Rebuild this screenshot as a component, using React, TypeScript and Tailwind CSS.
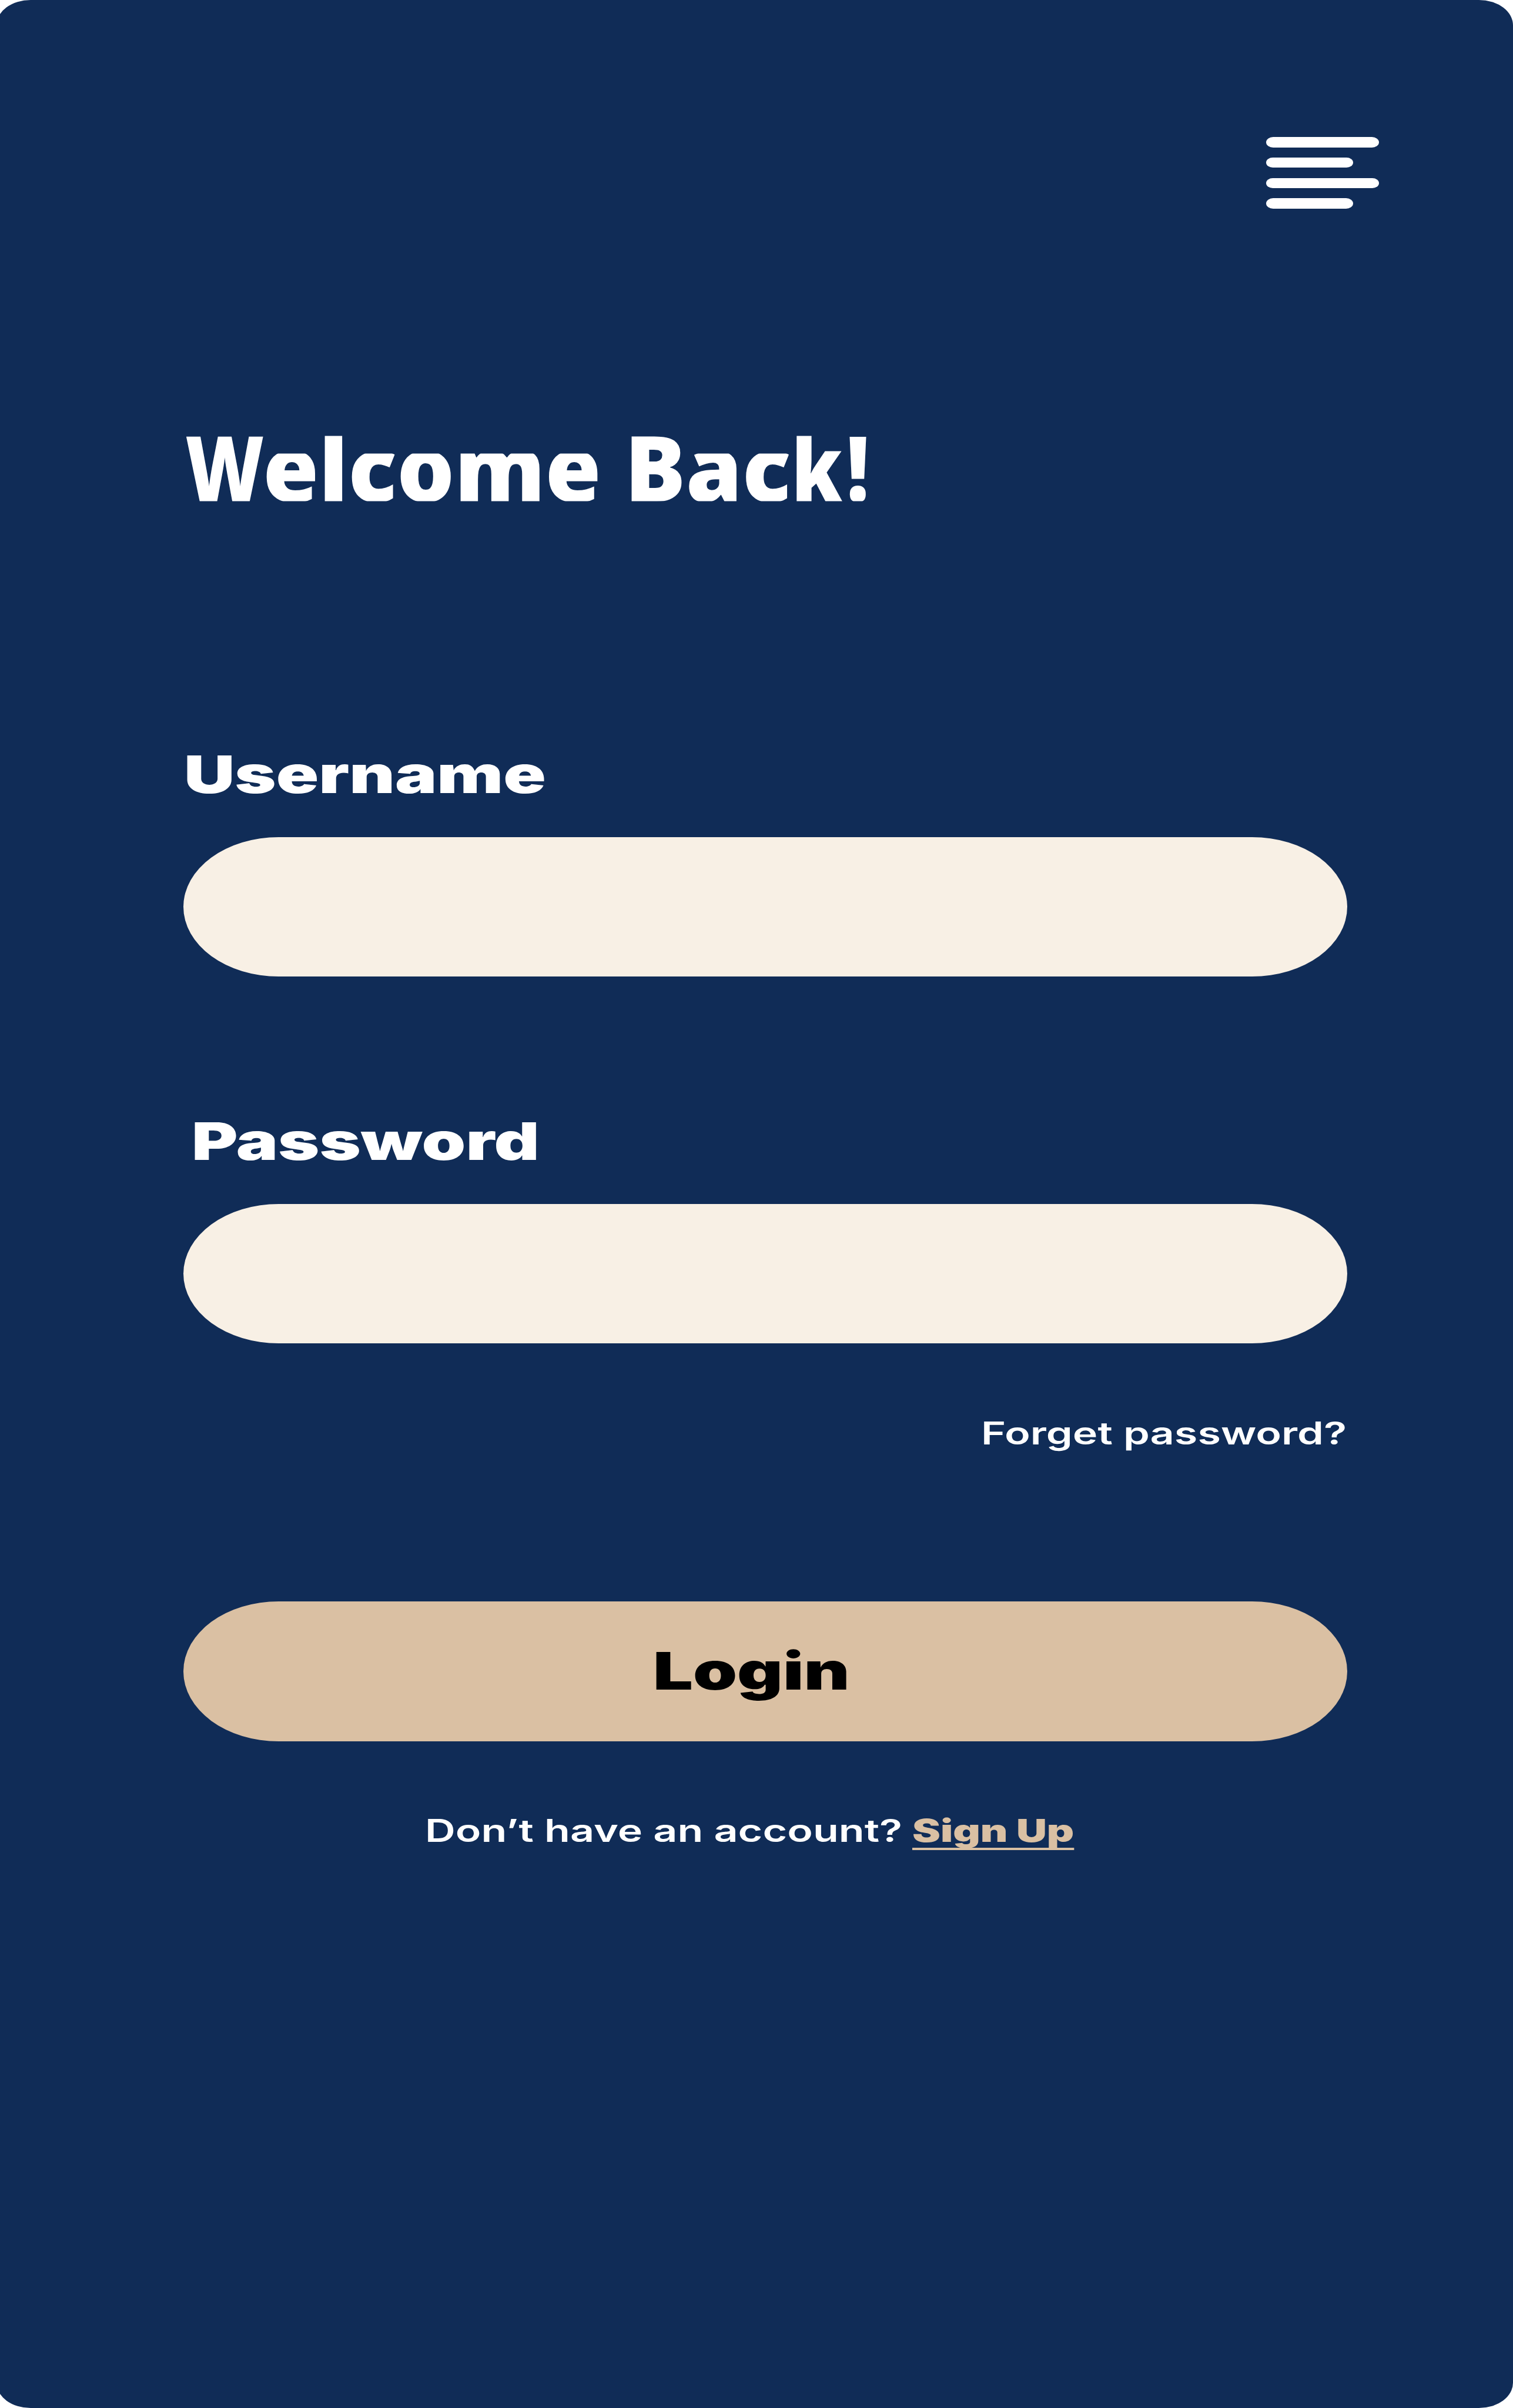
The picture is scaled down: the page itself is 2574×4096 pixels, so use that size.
import type { ReactNode } from "react";

function MenuIcon() {
  return (
    <button aria-label="Menu" className="ml-[2154px] mt-[233px] flex h-[122px] w-[192px] flex-col justify-between">
      <span className="h-[17.5px] w-full rounded-[12px/9px] bg-white" />
      <span className="h-[17.5px] w-[147.5px] rounded-[12px/9px] bg-white" />
      <span className="h-[17.5px] w-full rounded-[12px/9px] bg-white" />
      <span className="h-[17.5px] w-[147.5px] rounded-[12px/9px] bg-white" />
    </button>
  );
}

// Lowercase letters of the heading, trimmed flat at the x-height.
function Low({ children }: { children: string }) {
  return <span className="inline-block [clip-path:inset(56.5px_-4px_0_-4px)]">{children}</span>;
}

function Field({ id, type, label }: { id: string; type: string; label: ReactNode }) {
  return (
    <div className="flex flex-col gap-[63px]">
      {label}
      <input
        id={id}
        type={type}
        className="ml-[312px] h-[237px] w-[1980px] rounded-[162px/118.5px] bg-[#f8f0e5] px-40 text-[88px] text-black outline-none"
      />
    </div>
  );
}

export default function App() {
  return (
    <div className="h-[4096px] w-[2574px] overflow-hidden bg-white font-['Inter',sans-serif]">
      <main className="-ml-[6px] flex h-full w-[2580px] flex-col overflow-hidden rounded-[58px/43px] bg-[#102c57] pl-[6px] text-white">
        <MenuIcon />

        <h1 className="ml-[314.5px] mt-[360px] h-[155px] w-max origin-left scale-x-[0.994] whitespace-nowrap font-['Noto_Sans',sans-serif] text-[155px] font-black leading-none [clip-path:inset(26.5px_-20px_17.5px_-20px)]">
          <span className="-mr-[28px] inline-block origin-left scale-x-[0.84]">W</span>
          <Low>e</Low>l<Low>come</Low>
          {" B"}
          <Low>ac</Low>
          <span className="-mr-[9px] ml-[1.5px] inline-block origin-left scale-x-[0.85]">k</span>
          <span className="inline-block origin-left scale-x-[0.86]">!</span>
        </h1>

        <form className="mt-[403px] flex flex-col">
          <Field
            id="username"
            type="text"
            label={
              <label htmlFor="username" className="ml-[313px] w-max origin-left scale-x-[1.36] text-[88px] font-black leading-none">
                Username
              </label>
            }
          />
          <div className="mt-[236px]">
            <Field
              id="password"
              type="password"
              label={
                <label htmlFor="password" className="ml-[325.5px] w-max origin-left scale-x-[1.36] text-[88px] font-black leading-none">
                  Password
                </label>
              }
            />
          </div>

          <a className="ml-[1668.5px] mt-[126.5px] w-max origin-left scale-x-[1.358] whitespace-nowrap text-[53px] font-semibold leading-none">
            Forget password?
          </a>

          <button
            type="button"
            className="ml-[312px] mt-[259.5px] flex h-[238px] w-[1980px] items-start rounded-[162px/119px] bg-[#dac0a3] pl-[799px] pt-[73.5px] text-black"
          >
            <span className="w-max origin-left scale-x-[1.366] text-[88px] font-black leading-none">Login</span>
          </button>
        </form>

        <p className="mt-[126px] grid grid-cols-[829px_auto] pl-[723px] text-[53px] leading-none">
          <span className="w-max origin-left scale-x-[1.354] whitespace-nowrap font-semibold">Don’t have an account?</span>
          <a className="w-max origin-left scale-x-[1.358] whitespace-nowrap font-black text-[#dac0a3] underline decoration-[3.5px] underline-offset-[10px] [text-decoration-skip-ink:none]">
            Sign Up
          </a>
        </p>
      </main>
    </div>
  );
}
